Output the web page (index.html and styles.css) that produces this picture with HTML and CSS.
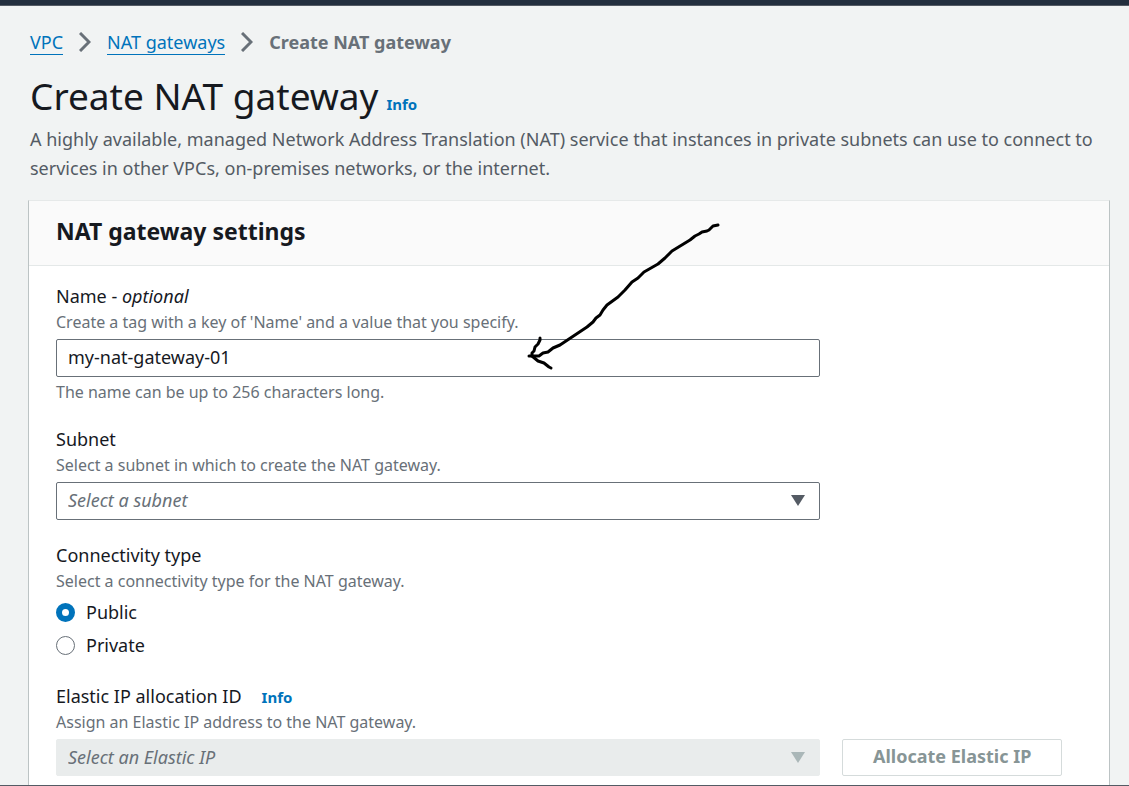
FILE: index.html
```html
<!DOCTYPE html>
<html lang="en">
<head>
<meta charset="utf-8">
<title>Create NAT gateway</title>
<link rel="stylesheet" href="styles.css">
</head>
<body>
<div class="topbar"></div>
<main class="page">
  <nav class="breadcrumbs" aria-label="Breadcrumbs">
    <a class="crumb" href="#">VPC</a>
    <svg class="chevron" viewBox="0 0 12 20" aria-hidden="true"><path d="M1 1 L10 10 L1 19"/></svg>
    <a class="crumb" href="#">NAT gateways</a>
    <svg class="chevron" viewBox="0 0 12 20" aria-hidden="true"><path d="M1 1 L10 10 L1 19"/></svg>
    <span class="crumb-current">Create NAT gateway</span>
  </nav>
  <header class="intro">
    <div class="title-row">
      <h1 class="title">Create NAT gateway</h1>
      <a class="info" href="#">Info</a>
    </div>
    <p class="description">A highly available, managed Network Address Translation (NAT) service that instances in private subnets can use to connect to services in other VPCs, on-premises networks, or the internet.</p>
  </header>
  <section class="panel">
    <h2 class="panel-header">NAT gateway settings</h2>
    <form class="form">
      <div class="field">
        <label class="label" for="name">Name - <em>optional</em></label>
        <p class="hint">Create a tag with a key of 'Name' and a value that you specify.</p>
        <div class="control">
          <input class="box" id="name" type="text" value="my-nat-gateway-01">
        </div>
        <p class="hint constraint">The name can be up to 256 characters long.</p>
      </div>
      <div class="field">
        <label class="label" for="subnet">Subnet</label>
        <p class="hint">Select a subnet in which to create the NAT gateway.</p>
        <div class="control">
          <select class="box placeholder" id="subnet"><option>Select a subnet</option></select>
          <svg class="caret" viewBox="0 0 14 11" aria-hidden="true"><path d="M0 0 H14 L7 11 Z"/></svg>
        </div>
      </div>
      <fieldset class="field">
        <legend class="label">Connectivity type</legend>
        <p class="hint">Select a connectivity type for the NAT gateway.</p>
        <div class="radios">
          <label class="radio"><input type="radio" name="type" checked>Public</label>
          <label class="radio"><input type="radio" name="type">Private</label>
        </div>
      </fieldset>
      <div class="field">
        <div class="label-row">
          <label class="label" for="eip">Elastic IP allocation ID</label>
          <a class="info" href="#">Info</a>
        </div>
        <p class="hint">Assign an Elastic IP address to the NAT gateway.</p>
        <div class="control">
          <select class="box placeholder" id="eip" disabled><option>Select an Elastic IP</option></select>
          <svg class="caret caret-disabled" viewBox="0 0 14 11" aria-hidden="true"><path d="M0 0 H14 L7 11 Z"/></svg>
        </div>
        <div class="action"><button class="button" type="button" disabled>Allocate Elastic IP</button></div>
      </div>
    </form>
    <svg class="arrow" viewBox="526 222 196 150" aria-hidden="true">
      <path d="M718 225 L713 226 L709 230 L707 231 L702 232 L699 234 L695 236 L690 240 L672 251 L665 258 L658 264 L644 272 L638 278 L632 282 L625 290 L618 297 L607 305 L603 310 L600 315 L596 318 L593 322 L587 327 L560 345 L553 348 L548 352 L543 353 L539 356 L529 356"/>
      <path d="M540 338 L540 340 L538 344 L535 347 L534 351 L532 353 L532 356 L538 361 L544 363 L549 367 L551 368"/>
    </svg>
  </section>
</main>
</body>
</html>
```

FILE: styles.css
```css
* { box-sizing: border-box; }

body {
  margin: 0;
  min-height: 100vh;
  display: flex;
  flex-direction: column;
  background: #f1f3f3;
  border-bottom: 1px solid #545b64;
  color: #16191f;
  font-family: "Noto Sans", "Open Sans", sans-serif;
  font-size: 18px;
  line-height: 28px;
}

h1, h2, p, fieldset, legend { margin: 0; padding: 0; border: 0; }

a { color: #0073bb; text-decoration: none; }

.topbar {
  height: 6px;
  background: #232f3e;
  border-bottom: 1px solid #545b64;
}

.page {
  flex: 1;
  display: flex;
  flex-direction: column;
  padding: 22px 19px 0 28px;
}

.breadcrumbs {
  display: flex;
  align-items: center;
  gap: 16px;
  padding-left: 2px;
}

.crumb {
  line-height: 24px;
  border-bottom: 1px solid #0073bb;
}

.crumb-current { color: #687078; font-weight: 700; }

.chevron {
  width: 12px;
  height: 20px;
  fill: none;
  stroke: #687078;
  stroke-width: 3;
}

.intro { padding: 14px 0 17px 2px; }

.title-row {
  display: flex;
  align-items: baseline;
  gap: 8px;
  padding-bottom: 3px;
}

.title {
  font-size: 37px;
  font-weight: 400;
  line-height: 52px;
}

.info { font-size: 15px; font-weight: 700; line-height: 24px; }

.description { color: #545b64; line-height: 29px; }

.panel {
  flex: 1;
  position: relative;
  background: #fff;
  border: 1px solid #bcc3c4;
  border-top-color: #e6e9e9;
  border-bottom: 0;
}

.panel-header {
  padding: 14px 27px 18px;
  background: #fafafa;
  border-bottom: 1px solid #e4e8e8;
  font-size: 23px;
  line-height: 32px;
}

.form {
  display: flex;
  flex-direction: column;
  gap: 21px;
  padding: 16px 27px 8px;
}

.field {
  display: grid;
  grid-template-columns: repeat(12, minmax(0, 1fr));
  column-gap: 22px;
}

.label, .label-row, .hint, .radios { grid-column: 1 / -1; }

.label-row {
  display: flex;
  align-items: baseline;
  gap: 20px;
  height: 28px;
}

.hint {
  color: #687078;
  font-size: 16px;
  line-height: 24px;
}

.constraint { padding-top: 3px; }

.control {
  grid-column: 1 / span 9;
  position: relative;
  margin-top: 5px;
}

.box {
  display: block;
  width: 100%;
  height: 38px;
  padding: 0 11px 2px;
  border: 1px solid #687078;
  border-radius: 2px;
  background: #fff;
  color: #16191f;
  font: inherit;
  appearance: none;
}

.placeholder { color: #687078; font-style: italic; opacity: 1; }

.box:disabled { height: 37px; background: #e9ecec; border-color: #e9ecec; }

.caret {
  position: absolute;
  top: 13px;
  right: 15px;
  width: 14px;
  height: 11px;
  fill: #545b64;
  pointer-events: none;
}

.caret-disabled { fill: #aab7b8; }

.radios {
  display: grid;
  gap: 5px;
  padding: 5px 0 2px;
}

.radio {
  display: flex;
  align-items: center;
  gap: 11px;
}

.radio input {
  appearance: none;
  width: 19px;
  height: 19px;
  margin: 0;
  border: 1px solid #687078;
  border-radius: 50%;
  background: #fff;
}

.radio input:checked { border: 6px solid #0073bb; }

.action { grid-column: 10 / -1; margin-top: 5px; }

.button {
  display: block;
  height: 37px;
  padding: 0 30px 3px;
  border: 1px solid #d5dbdb;
  border-radius: 2px;
  background: #fff;
  color: #879596;
  font: inherit;
  font-weight: 700;
  white-space: nowrap;
}

.arrow {
  position: absolute;
  top: 21px;
  left: 497px;
  width: 196px;
  height: 150px;
  fill: none;
  stroke: #000;
  stroke-width: 3;
  stroke-linecap: round;
  stroke-linejoin: round;
  pointer-events: none;
}
```
